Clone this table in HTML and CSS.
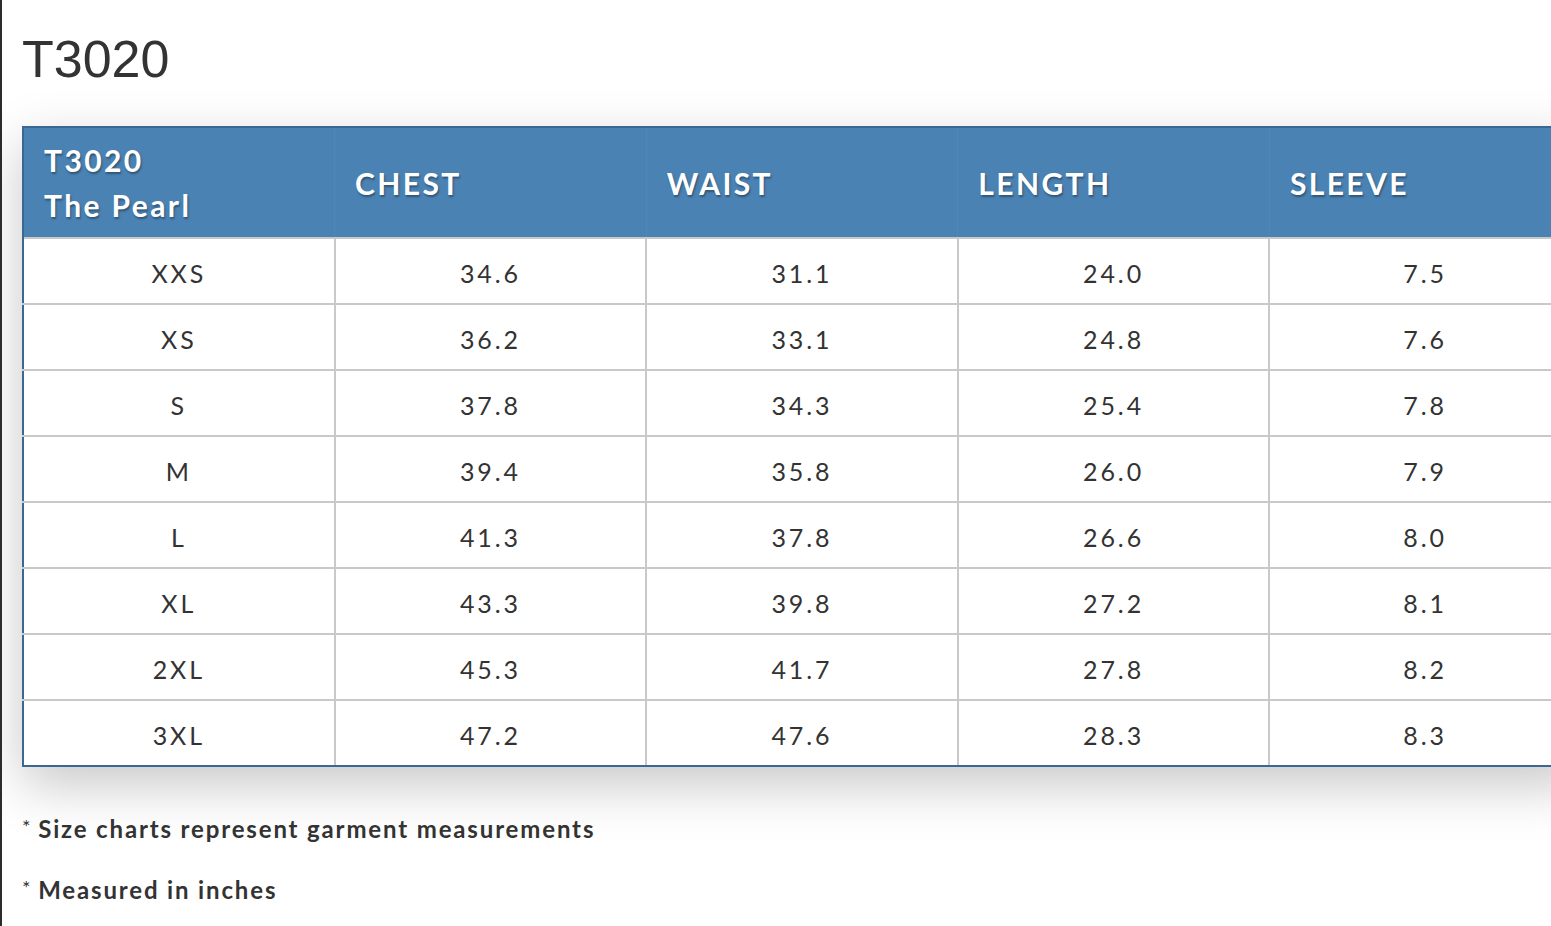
FILE: index.html
```html
<!DOCTYPE html>
<html lang="en">
<head>
<meta charset="utf-8">
<title>T3020 Size Chart</title>
<link rel="stylesheet" href="styles.css">
</head>
<body>
<div class="page">
  <h1 class="title">T3020</h1>
  <table class="chart">
    <colgroup><col><col><col><col><col></colgroup>
    <thead>
      <tr>
        <th class="model">T3020<br>The Pearl</th>
        <th>CHEST</th>
        <th>WAIST</th>
        <th>LENGTH</th>
        <th>SLEEVE</th>
      </tr>
    </thead>
    <tbody>
      <tr><td>XXS</td><td>34.6</td><td>31.1</td><td>24.0</td><td>7.5</td></tr>
      <tr><td>XS</td><td>36.2</td><td>33.1</td><td>24.8</td><td>7.6</td></tr>
      <tr><td>S</td><td>37.8</td><td>34.3</td><td>25.4</td><td>7.8</td></tr>
      <tr><td>M</td><td>39.4</td><td>35.8</td><td>26.0</td><td>7.9</td></tr>
      <tr><td>L</td><td>41.3</td><td>37.8</td><td>26.6</td><td>8.0</td></tr>
      <tr><td>XL</td><td>43.3</td><td>39.8</td><td>27.2</td><td>8.1</td></tr>
      <tr><td>2XL</td><td>45.3</td><td>41.7</td><td>27.8</td><td>8.2</td></tr>
      <tr><td>3XL</td><td>47.2</td><td>47.6</td><td>28.3</td><td>8.3</td></tr>
    </tbody>
  </table>
  <div class="notes">
    <p class="note"><span class="ast">*</span> Size charts represent garment measurements</p>
    <p class="note"><span class="ast">*</span> Measured in inches</p>
  </div>
</div>
</body>
</html>
```

FILE: styles.css
```css
html, body {
  margin: 0;
  padding: 0;
  background: #ffffff;
  overflow: hidden;
}

body {
  border-left: 2px solid #2c2c2c;
  min-height: 926px;
  box-sizing: border-box;
}

.page {
  padding: 33px 0 0 20px;
}

.title {
  margin: 0 0 40px 0;
  font-family: "Liberation Sans", Arial, sans-serif;
  font-weight: normal;
  font-size: 52px;
  line-height: 53px;
  color: #333333;
}

.chart {
  width: 1559px;
  table-layout: fixed;
  border-collapse: collapse;
  border: 2px solid #3b6795;
  box-shadow: 0 18px 50px rgba(0, 0, 0, 0.22);
  font-family: Lato, "Open Sans", sans-serif;
  background: #ffffff;
}

.chart col {
  width: 311.6px;
}

.chart th {
  background: #4a82b3;
  color: #ffffff;
  font-weight: bold;
  font-size: 30px;
  line-height: 45px;
  letter-spacing: 2.4px;
  text-align: left;
  padding: 10px 20px 9px 20px;
  height: 86px;
  border-right: 1px solid #4f87b8;
  text-shadow: 1px 2px 2px rgba(0, 0, 0, 0.35);
  vertical-align: middle;
}

.chart td {
  height: 60px;
  padding: 4px 0 0 0;
  text-align: center;
  vertical-align: middle;
  font-size: 25px;
  letter-spacing: 2.9px;
  color: #333333;
  border: 2px solid #c9c9c9;
}

.chart tbody tr:last-child td {
  border-bottom: 2px solid #3b6795;
}

.chart tbody td:first-child {
  border-left: 2px solid #3b6795;
}

.notes {
  padding-top: 45px;
}

.note {
  margin: 0 0 30px 0;
  font-family: Lato, "Open Sans", sans-serif;
  font-weight: bold;
  font-size: 24px;
  line-height: 28px;
  color: #333333;
  letter-spacing: 1.85px;
}

.ast {
  font-weight: normal;
  font-size: 20px;
  vertical-align: 4px;
  letter-spacing: 0;
}
```
